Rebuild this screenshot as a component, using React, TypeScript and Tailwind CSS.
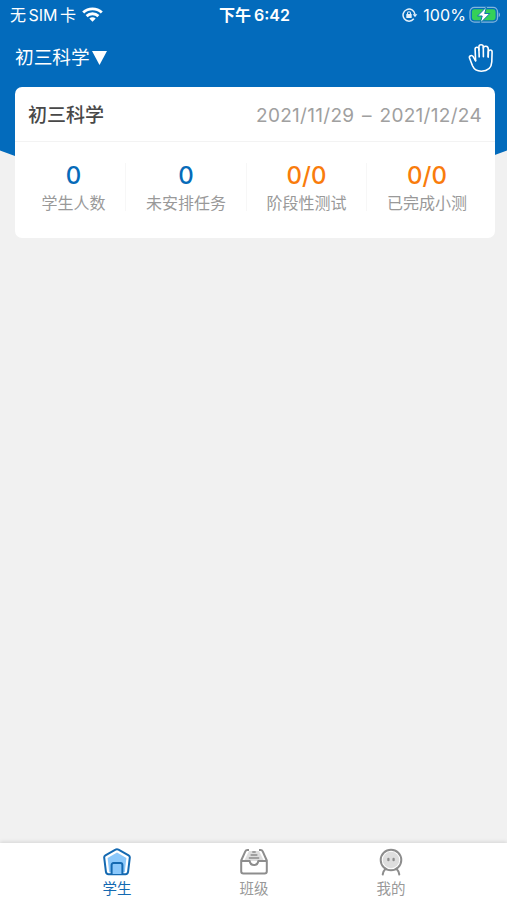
import type { ReactNode } from 'react';

const stats = [
  { label: '学生人数', value: '0', color: 'text-[#066bb9]', box: 'w-[104px]' },
  { label: '未安排任务', value: '0', color: 'text-[#066bb9]', box: 'w-[121px]' },
  { label: '阶段性测试', value: '0/0', color: 'text-[#f97c0c]', box: 'w-[120px]' },
  { label: '已完成小测', value: '0/0', color: 'text-[#f97c0c]', box: 'w-[120px]' },
];

function WifiIcon() {
  return (
    <svg width="21" height="16" viewBox="0 0 21 16" fill="none" stroke="white" strokeWidth="2.9">
      <path d="M1.2 5.5C6.4.6 14.6.6 19.8 5.5" />
      <path d="M4.6 9.1C7.9 6 13.1 6 16.4 9.1" />
      <path d="M10.5 14.7 7.3 11.5c1.8-1.7 4.6-1.7 6.4 0Z" fill="white" stroke="none" />
    </svg>
  );
}

function RotationLockIcon() {
  return (
    <svg width="16" height="14" viewBox="0 0 16 14" fill="none" stroke="#e4f0fa" strokeWidth="1.5">
      <path d="M11.8 10.8A6 6 0 1 1 13 6.4" />
      <path d="M10.7 6.3h4.6L13 9.3Z" fill="#e4f0fa" stroke="none" />
      <rect x="4.3" y="6" width="5.4" height="4" rx=".5" fill="#e4f0fa" stroke="none" />
      <path d="M5.5 6.4V5.2a1.5 1.5 0 0 1 3 0v1.2" strokeWidth="1.1" />
    </svg>
  );
}

function BatteryIcon() {
  return (
    <svg width="32" height="18" viewBox="0 0 32 18" fill="none">
      <rect x="1" y="1.3" width="27.5" height="14.9" rx="4.4" stroke="#82b5dd" strokeWidth="1.3" />
      <rect x="2.9" y="3.3" width="23.7" height="10.9" rx="2.4" fill="#35d158" />
      <path d="M29.7 6.6c1.7.5 1.7 4 0 4.5Z" fill="#82b5dd" />
      <path d="M17.6.8 8.5 10h4.7l-2 7.2L20.8 7.5h-5.1Z" fill="white" stroke="#0d76ae" strokeWidth="1" />
    </svg>
  );
}

function HandIcon() {
  return (
    <svg width="28" height="30" viewBox="0 0 28 30" fill="none" stroke="white" strokeWidth="1.6" strokeLinecap="round" strokeLinejoin="round">
      <path d="M8.6 17.8 6.2 13.6c-1.3-2.1-4.4-.9-3.7 1.4l3 7.8c1.7 3.9 4.6 5.4 8.8 5.4 6.6 0 10.2-3.6 10.5-9.4l.3-9.9c0-2.6-3.5-2.6-3.7 0l-.2 5" />
      <path d="M8.6 17.8 8.1 6.2c0-2.6 3.6-2.6 3.8 0l.3 7.7" />
      <path d="M11.9 7.1V3.9c0-2.8 4.3-2.8 4.4 0l.1 9.8" />
      <path d="M16.3 5c.4-2.5 4.9-2.3 4.9.8v8.1" />
    </svg>
  );
}

function HomeIcon() {
  return (
    <svg className="shrink-0" width="28" height="28" viewBox="0 0 28 28" fill="none" stroke="#1469b1" strokeWidth="2" strokeLinejoin="round">
      <path d="M12.5 1.7 2.4 7.3c-1 .6-1.3 1.3-1.2 2.3l1.7 14.1c.2 1.6 1 2.5 2.6 2.5h17c1.6 0 2.4-.9 2.6-2.5l1.7-14.1c.1-1-.2-1.7-1.2-2.3L15.5 1.7c-1.1-.6-2-.6-3 0Z" fill="white" />
      <path d="m14 4.4 9.4 5.6-1.6 14.2H6.2L4.6 10Z" fill="#8bc8fb" stroke="none" />
      <path d="M8.6 26v-9c0-1.2.7-1.9 1.9-1.9h7c1.2 0 1.9.7 1.9 1.9v9" fill="#8bc8fb" />
    </svg>
  );
}

function TrayIcon() {
  return (
    <svg className="shrink-0" width="28" height="28" viewBox="0 0 28 28" fill="none" stroke="#8d8d8d" strokeWidth="2" strokeLinejoin="round">
      <path d="M9 3h10l5 10H4Z" fill="#dedede" stroke="none" />
      <path d="M9 2H7.3c-1 0-1.6.4-2 1.3L1.2 12.5v10.8c0 1.6.7 2.2 2.2 2.2h21.2c1.5 0 2.2-.6 2.2-2.2V12.5L22.7 3.3c-.4-.9-1-1.3-2-1.3H19" />
      <path d="M1.5 13h8.2c.4 2.8 1.8 4 4.3 4s3.9-1.2 4.3-4h8.2" fill="white" />
      <path d="M12.3 4h3.4M10.6 7h6.8M8.8 10.1h10.4" strokeWidth="1.5" />
    </svg>
  );
}

function PersonIcon() {
  return (
    <svg className="shrink-0" width="28" height="28" viewBox="0 0 28 28" fill="none" stroke="#8d8d8d" strokeWidth="2" strokeLinecap="round">
      <circle cx="14" cy="12" r="10.3" fill="white" />
      <circle cx="14" cy="12" r="8.3" fill="#dedede" stroke="none" />
      <path d="M11.4 11v1.2M16.6 11v1.2" strokeWidth="2.3" />
      <path d="M8.4 21c-1.6 1.5-2.4 3.2-2.7 5.5M19.6 21c1.6 1.5 2.4 3.2 2.7 5.5" />
    </svg>
  );
}

function Tab({ label, color, children }: { label: string; color: string; children: ReactNode }) {
  return (
    <button className={`flex w-[137px] flex-col items-center pt-[5px] text-[14.5px] leading-[20px] ${color}`}>
      {children}
      <span className="mt-[3px]">{label}</span>
    </button>
  );
}

export default function App() {
  return (
    <div className="flex h-[900px] w-[507px] flex-col overflow-hidden bg-[#f1f1f1] font-['Inter','Noto_Sans_CJK_SC',sans-serif]">
      <header className="relative h-[150px] shrink-0 bg-[#036bbc] text-white">
        <svg className="absolute left-0 top-[149px]" width="507" height="30" viewBox="0 0 507 30">
          <path d="M0 0h507v1.5L492 7C350 35 157 35 15 7L0 1.5Z" fill="#036bbc" />
        </svg>

        <div className="grid h-[30px] grid-cols-[1fr_auto_1fr] items-center pl-[10px] pr-[6px] text-[16px]">
          <div className="flex items-center gap-[6px]">
            <span className="whitespace-nowrap [word-spacing:-2px]">无 SIM 卡</span>
            <WifiIcon />
          </div>
          <div className="pr-[2px] text-[16px] font-semibold [word-spacing:-1px]">下午 6:42</div>
          <div className="flex items-center justify-end">
            <RotationLockIcon />
            <span className="ml-[5px] mr-[3px] tracking-[0.1px]">100%</span>
            <span className="mb-px"><BatteryIcon /></span>
          </div>
        </div>

        <div className="flex h-[57px] items-center justify-between pl-[15px] pr-[12px]">
          <button className="flex items-center text-[18.7px]">
            <span>初三科学</span>
            <svg className="ml-[2px]" width="15" height="14" viewBox="0 0 15 14">
              <path d="M0 0h15L7.5 14Z" fill="white" />
            </svg>
          </button>
          <span className="mb-[2px]"><HandIcon /></span>
        </div>
      </header>

      <main className="relative -mt-[63px] flex-1 pl-[15px] pr-[12px]">
        <section className="h-[151px] rounded-[7px] bg-white">
          <div className="flex h-[55px] items-center justify-between border-b border-[#f3f3f3] pl-[13px] pr-[13px] pt-[4px]">
            <h1 className="text-[19px] font-medium text-[#484848]">初三科学</h1>
            <span className="text-[19px] tracking-[0.3px] text-[#a0a0a0] [word-spacing:2px]">2021/11/29 – 2021/12/24</span>
          </div>
          <div className="flex pl-[7px] pt-[21px]">
            {stats.map((s, i) => (
              <div key={s.label} className={`flex h-[48px] flex-col items-center ${s.box} ${i < 3 ? 'border-r border-[#f7f7f7]' : ''}`}>
                <span className={`text-[24px] leading-[26px] font-medium ${s.color}`}>{s.value}</span>
                <span className="text-[16px] leading-[28px] whitespace-nowrap text-[#999]">{s.label}</span>
              </div>
            ))}
          </div>
        </section>
      </main>

      <nav className="flex h-[57px] shrink-0 justify-center bg-white pl-px shadow-[0_-1px_4px_rgba(0,0,0,0.12)]">
        <Tab label="学生" color="text-[#1469b1]"><HomeIcon /></Tab>
        <Tab label="班级" color="text-[#999]"><TrayIcon /></Tab>
        <Tab label="我的" color="text-[#999]"><PersonIcon /></Tab>
      </nav>
    </div>
  );
}
